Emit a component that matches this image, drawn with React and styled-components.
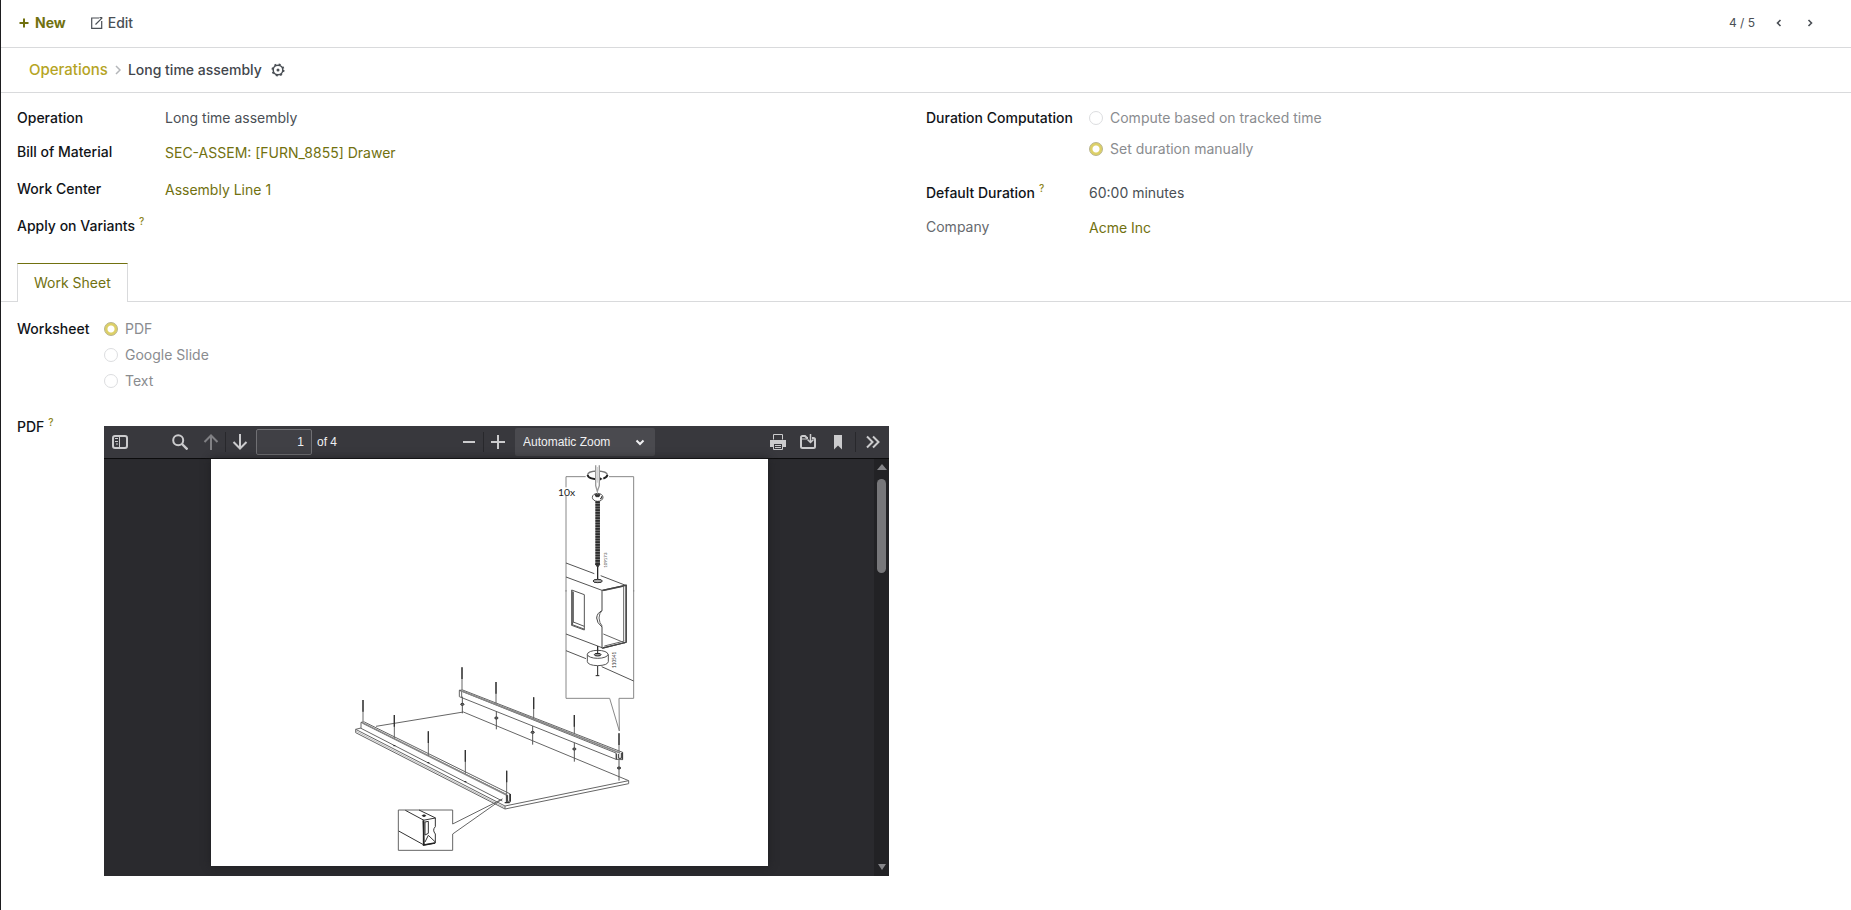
import React from "react";
import styled, { createGlobalStyle } from "styled-components";

const GlobalStyle = createGlobalStyle`
  *, *::before, *::after {
    box-sizing: border-box;
  }
  body {
    margin: 0;
    background: #fff;
    color: #4a4f55;
    font-family: Inter, "Liberation Sans", sans-serif;
    font-size: 14px;
    line-height: 20px;
  }
  a {
    text-decoration: none;
  }
  svg {
    display: block;
    fill: none;
    stroke: currentColor;
  }
`;

const Screen = styled.div`
  min-height: 100vh;
  border-left: 1px solid #1d1d1f;
`;
const ControlBar = styled.header`
  display: flex;
  align-items: center;
  height: 48px;
  padding: 0 26px 2px 17px;
  border-bottom: 1px solid #d9dadc;
`;
const BarButton = styled.button`
  display: flex;
  align-items: center;
  gap: 5px;
  margin-right: 25px;
  padding: 0;
  border: 0;
  background: none;
  font: inherit;
  font-weight: ${(props) => (props.$primary ? 700 : 500)};
  color: ${(props) => (props.$primary ? "#71710f" : "#4a4f55")};
`;
const Pager = styled.div`
  display: flex;
  align-items: center;
  margin-left: auto;
  font-size: 12px;
`;
const PagerButton = styled.button`
  display: flex;
  justify-content: center;
  width: 31px;
  padding: 0;
  border: 0;
  background: none;
  color: #4a4f55;
`;
const PagerValue = styled.span`
  margin-right: 8px;
`;
const Breadcrumb = styled.nav`
  display: flex;
  align-items: center;
  gap: 7px;
  height: 45px;
  padding: 0 28px;
  border-bottom: 1px solid #d9dadc;
  font-weight: 500;
  color: #42464c;
`;
const BreadcrumbLink = styled.a`
  color: #b5a424;
  font-size: 15px;
`;
const IconButton = styled.button`
  padding: 0 2px;
  border: 0;
  background: none;
  color: #4a4f55;
`;
const Sheet = styled.div`
  display: grid;
  grid-template-columns: 1fr 1fr;
  padding: ${(props) => props.$top}px 16px 0;
`;
const Group = styled.div`
  display: flex;
  flex-direction: column;
  padding-right: 37px;
`;
const Row = styled.div`
  display: grid;
  grid-template-columns: ${(props) => props.$label}px 1fr;
  align-items: ${(props) => (props.$top ? "start" : "center")};
  min-height: ${(props) => props.$height || 37}px;
`;
const Label = styled.div`
  color: ${(props) => (props.$muted ? "#66696e" : "#111418")};
  font-weight: ${(props) => (props.$muted ? 400 : 500)};
  line-height: ${(props) => props.$line || 20}px;
`;
const Help = styled.sup`
  margin-left: 4px;
  font-size: 10px;
  line-height: 0;
  color: #8c8420;
`;
const ValueLink = styled.a`
  padding-top: 2px;
  color: #71710f;
`;
const Options = styled.div`
  display: flex;
  flex-direction: column;
`;
const Option = styled.label`
  display: flex;
  align-items: center;
  gap: 7px;
  height: ${(props) => props.$height}px;
  color: #8a8c8f;
`;
const Radio = styled.input`
  appearance: none;
  width: 14px;
  height: 14px;
  margin: 0;
  border: 1px solid #dcdddf;
  border-radius: 50%;
  background: #fff;
  &:checked {
    border-color: #b9b58c;
    background: radial-gradient(circle, #fff 3px, #ddd067 4px);
  }
`;
const Tabs = styled.div`
  display: flex;
  margin-top: 19px;
  padding: 0 16px;
  border-bottom: 1px solid #d9dadc;
`;
const Tab = styled.button`
  height: 39px;
  margin-bottom: -1px;
  padding: 0 16px;
  border: 1px solid #d9dadc;
  border-top-color: #71710f;
  border-bottom: 0;
  background: #fff;
  color: #71710f;
  font: inherit;
`;
const Viewer = styled.section`
  margin-top: 12px;
  background: #2a2a2e;
`;
const Toolbar = styled.div`
  display: flex;
  justify-content: space-between;
  align-items: center;
  height: 33px;
  padding: 0 2px;
  border-bottom: 1px solid #0c0c0d;
  background: #38383d;
  font-family: "Liberation Sans", sans-serif;
  font-size: 12px;
  color: #f0f0f2;
`;
const Tools = styled.div`
  display: flex;
  align-items: center;
  gap: ${(props) => props.$gap || 0}px;
`;
const Tool = styled.button`
  display: flex;
  align-items: center;
  justify-content: center;
  width: 28px;
  height: 28px;
  padding: 0;
  border: 0;
  background: none;
  color: ${(props) => (props.disabled ? "#808084" : "#cbcbcd")};
`;
const SearchTools = styled(Tools)`
  margin-right: 3px;
`;
const Separator = styled.span`
  width: 1px;
  height: 20px;
  margin: 0 ${(props) => props.$space || 0}px;
  background: #28282c;
`;
const PageInput = styled.input`
  width: 56px;
  height: 26px;
  margin: 0 5px 0 2px;
  padding: 0 7px;
  border: 1px solid #707074;
  border-radius: 2px;
  background: #404045;
  color: inherit;
  font: inherit;
  text-align: right;
`;
const PageCount = styled.span`
  padding-right: 9px;
`;
const ZoomBox = styled.div`
  display: grid;
  align-items: center;
  margin-left: 3px;
  > * {
    grid-area: 1 / 1;
  }
  svg {
    justify-self: end;
    margin-right: 10px;
    pointer-events: none;
  }
`;
const ZoomSelect = styled.select`
  appearance: none;
  width: 140px;
  height: 28px;
  padding: 0 8px;
  border: 0;
  border-radius: 2px;
  background: #4a4a4f;
  color: inherit;
  font: inherit;
`;
const Canvas = styled.div`
  display: flex;
  align-items: stretch;
`;
const Pages = styled.div`
  flex: 1;
  padding: 0 106px 10px 107px;
`;
const Page = styled.div`
  background: #fff;
  box-shadow: 0 0 8px #1f1f22;
`;
const ScrollTrack = styled.div`
  display: flex;
  flex-direction: column;
  align-items: center;
  width: 15px;
  padding: 5px 0 6px;
  background: #222225;
  color: #858589;
`;
const ScrollThumb = styled.div`
  width: 9px;
  height: 94px;
  margin: 9px 0 auto;
  border-radius: 5px;
  background: #77777a;
`;

const backPins = [
  [366, 22, 90], [468, 66, 131], [581, 112, 176], [703, 165, 222], [837, 220, 275],
];
const frontPins = [
  [69, 120, 186], [163, 165, 235], [265, 214, 287], [376, 270, 341], [500, 332, 402],
];
const washers = [
  [367, 133, 110, 160], [469, 174, 154, 208], [578, 217, 198, 254], [703, 267, 248, 305], [837, 324, 300, 362],
];

const AssemblyDrawing = () => (
  <svg viewBox="0 0 1671 1221" width="100%" role="img" aria-label="Drawer assembly" stroke="#777" strokeWidth="3">
    {/* drawer base with both side rails */}
    <g transform="translate(387 603)" stroke="#666">
      <path d="M108 199 370 156 866 362 495 438 47 208 M47 208v10l448 229 371-76v-9 M495 438v9 M47 208l16-4" />
      <path d="M47 213 495 443" stroke="#999" strokeWidth="2" />
      <path d="M63 187v18l424 218 M63 187l10-1 438 216v24l-12 2v-25L63 187 M503 406v18h6v-22" />
      <path d="M70 190 500 405" stroke="#888" strokeWidth="5" />
      <path d="M358 91v19l470 188v-19L358 91l10-1 480 187v22l-20-1 M358 91l7 2v18" />
      <path d="M364 92 840 279" stroke="#888" strokeWidth="5" />
      <path d="M830 281v17 M847 277v22 M836 282v13h8v-16" stroke="#333" strokeWidth="3" />
      <path d="M501 404v24 M511 402v22 M494 428h15" stroke="#333" strokeWidth="4" />
      {[...backPins, ...frontPins].map(([x, top, end]) => (
        <g key={x}>
          <path d={`M${x} ${top}V${end}`} strokeWidth="3" />
          <path d={`M${x} ${top}v35`} stroke="#333" strokeWidth="4" />
        </g>
      ))}
      {washers.map(([x, y, top, end]) => (
        <g key={x}>
          <path d={`M${x} ${top}V${end}`} strokeWidth="3" stroke="#555" />
          <ellipse cx={x} cy={y} rx="5" ry="3" fill="#777" stroke="#333" />
        </g>
      ))}
      <path d="M160 257h6 M262 308h6 M373 365h6" stroke="#222" />
      <path d="M175 450h163v42l149-75-149 105v49H175z" />
      <path d="M196 451l56 30 M237 450l50 24 M176 513l76 42 M249 481l37-7v26q-10 10 0 22v27l-34 6z M255 486l10-2v36l-10 5z M255 546l10-20 21 20" stroke="#333" />
      <path d="M251 482v73l34-6" stroke="#222" strokeWidth="5" />
      <ellipse cx="252" cy="467" rx="5" ry="2" stroke="#222" fill="#222" />
    </g>
    {/* enlarged callout: screw */}
    <g transform="translate(987 -12)">
      <path d="M137 65H78v32 M78 122v288 M207 65h74v345" strokeWidth="3" stroke="#888" />
      <path d="M143 60q0-11 28-12 31 1 31 12" stroke="#777" strokeWidth="4" />
      <path d="M143 60q1 13 39 13M202 60q0 6-12 11" stroke="#222" strokeWidth="6" />
      <path d="M174 63l14 9-14 7z" fill="#222" stroke="none" />
      <path d="M167 31v61l5 17 6-17V31" fill="#fff" stroke="#999" strokeWidth="4" />
      <path d="M172 36v47" stroke="#ccc" strokeWidth="3" />
      <ellipse cx="173" cy="127" rx="16" ry="12" stroke="#555" fill="#fff" />
      <path d="M165 119h15l-3 6h-9z M180 132q8-2 5-8" fill="#333" stroke="#333" />
      <path d="M173 139v188" stroke="#777" strokeWidth="14" />
      <path d="M173 139v190" stroke="#2b2b2b" strokeWidth="13" strokeDasharray="5 3" />
      <path d="M166 327l7 10 7-10z" fill="#333" stroke="#333" />
      <path d="M173 337v40" stroke="#222" />
      <ellipse cx="173" cy="379" rx="13" ry="3" stroke="#222" fill="#555" />
      <text x="54" y="123" fontFamily="Lato, sans-serif" fontSize="31" fill="#222" stroke="none">10x</text>
      <text transform="translate(202 338) rotate(-90)" fontFamily="Lato, sans-serif" fontSize="13" fill="#333" stroke="none">109173</text>
    </g>
    {/* enlarged callout: rail end and washer */}
    <g transform="translate(987 303)">
      <path d="M78 90v325h131l29 98-1-98h44V90" stroke="#888" />
      <path d="M78 9l85 32 M182 47l75 29 M78 51l108 40 M78 222l108 41 M78 272l60 24 M185 320l96 43" stroke="#555" />
      <path d="M186 91l73-16v172l-73 18v-64q-16-13-16-27 1-15 16-22z" stroke="#444" />
      <path d="M186 152q-8 6-9 22 1 15 10 25 M191 92l60-13v165 M190 222l65 27 M193 258l60-15" stroke="#666" />
      <path d="M188 91l70-15v171l-70 17" stroke="#444" strokeWidth="4" />
      <path d="M95 90l38 14v106L95 196z M100 95v91l33 13 M100 186l-5 10" stroke="#555" />
      <path d="M97 94v100l35 13" stroke="#555" strokeWidth="3" />
      <path d="M173 20v43 M173 260v25 M173 316v31" stroke="#222" />
      <ellipse cx="173" cy="63" rx="14" ry="5" stroke="#333" fill="#aaa" />
      <path d="M142 283v22q2 11 31 12 30-1 32-12v-22" fill="#fff" stroke="#555" />
      <ellipse cx="173" cy="283" rx="31" ry="12" fill="#fff" stroke="#555" />
      <ellipse cx="173" cy="284" rx="10" ry="4" fill="#999" stroke="#222" />
      <path d="M173 258v24 M167 347h11" stroke="#222" />
      <text transform="translate(227 324) rotate(-90)" fontFamily="Lato, sans-serif" fontSize="14" fill="#333" stroke="none">110541</text>
    </g>
  </svg>
);

const RadioOption = ({ name, text, checked, height }) => (
  <Option $height={height}>
    <Radio type="radio" name={name} defaultChecked={checked} />
    {text}
  </Option>
);

const Chevron = ({ left }) => (
  <svg width="12" height="12" strokeWidth="1.6">
    <path d={left ? "M7.5 3 4.5 6l3 3" : "M4.5 3l3 3-3 3"} />
  </svg>
);

const Crumb = () => (
  <svg width="6" height="12" strokeWidth="1.5">
    <path d="M1 2l4 4-4 4" stroke="#b4b6b9" />
  </svg>
);

const PdfViewer = () => (
  <Viewer aria-label="PDF viewer">
    <Toolbar>
      <Tools>
        <SearchTools $gap={32}>
          <Tool aria-label="Toggle Sidebar">
            <svg width="16" height="16" strokeWidth="2">
              <rect x="1" y="2" width="14" height="12" rx="2" />
              <path d="M7.5 2v12M3 4.5h3M3 7.5h3M4 10h2" strokeWidth="1" />
            </svg>
          </Tool>
          <Tool aria-label="Find">
            <svg width="16" height="16" strokeWidth="2">
              <circle cx="6.2" cy="6.2" r="5" />
              <path d="M10 10l5.5 5.5" strokeWidth="2.4" />
            </svg>
          </Tool>
        </SearchTools>
        <Tool aria-label="Previous Page" disabled>
          <svg width="16" height="16" strokeWidth="2">
            <path d="M8 16V1.5M1.5 8 8 1.5 14.5 8" />
          </svg>
        </Tool>
        <Separator />
        <Tool aria-label="Next Page">
          <svg width="16" height="16" strokeWidth="2">
            <path d="M8 0v14.5M1.5 8 8 14.5 14.5 8" />
          </svg>
        </Tool>
        <PageInput aria-label="Page" defaultValue="1" />
        <PageCount>of 4</PageCount>
      </Tools>
      <Tools>
        <Tool aria-label="Zoom Out">
          <svg width="16" height="16" strokeWidth="2">
            <path d="M2 8h12" />
          </svg>
        </Tool>
        <Separator />
        <Tool aria-label="Zoom In">
          <svg width="16" height="16" strokeWidth="2">
            <path d="M1 8h14M8 1v14" />
          </svg>
        </Tool>
        <ZoomBox>
          <ZoomSelect aria-label="Zoom">
            <option>Automatic Zoom</option>
          </ZoomSelect>
          <svg width="10" height="10" strokeWidth="2">
            <path d="M1.5 3.5 5 7l3.5-3.5" />
          </svg>
        </ZoomBox>
      </Tools>
      <Tools $gap={2}>
        <Tool aria-label="Print">
          <svg width="16" height="16">
            <path d="M0 6h16v7h-3v-3H3v3H0z" fill="currentColor" stroke="none" />
            <path d="M3.5 5.5v-5h9v5M3.5 9.5h9v6h-9zM5 11.5h6M5 13.5h6" />
          </svg>
        </Tool>
        <Tool aria-label="Save">
          <svg width="16" height="16" strokeWidth="2">
            <path d="M12 4h1.5Q15 4 15 5.5v7q0 1.5-1.5 1.5h-11Q1 14 1 12.5v-9Q1 2 2.5 2H5l2 2h1" />
            <path d="M1 5h6" strokeWidth="1" />
            <path d="M10.500 0v8M7.5 5.5l3 3 3-3" strokeWidth="1.5" />
          </svg>
        </Tool>
        <Tool aria-label="Current View">
          <svg width="16" height="16">
            <path d="M4 1h8v14.5l-4-4-4 4z" fill="currentColor" stroke="none" />
          </svg>
        </Tool>
        <Separator $space={1} />
        <Tool aria-label="Tools">
          <svg width="16" height="16" strokeWidth="2">
            <path d="M2 2.5 7.5 8 2 13.5M8 2.5 13.5 8 8 13.5" />
          </svg>
        </Tool>
      </Tools>
    </Toolbar>
    <Canvas>
      <Pages>
        <Page>
          <AssemblyDrawing />
        </Page>
      </Pages>
      <ScrollTrack>
        <svg width="10" height="6">
          <path d="M0 6l5-6 5 6z" fill="currentColor" stroke="none" />
        </svg>
        <ScrollThumb />
        <svg width="8" height="6">
          <path d="M0 0h8L4 6z" fill="currentColor" stroke="none" />
        </svg>
      </ScrollTrack>
    </Canvas>
  </Viewer>
);

const App = () => {
  return (
    <Screen>
      <GlobalStyle />
      <ControlBar>
        <BarButton $primary>
          <svg width="12" height="12" strokeWidth="2">
            <path d="M1.5 6h9M6 1.5v9" />
          </svg>
          New
        </BarButton>
        <BarButton>
          <svg width="12" height="12" strokeWidth="1.2">
            <path d="M8 1H.7v10.3h10V4M4.5 7.5 11.2.8M8.5.7h2.8" />
          </svg>
          Edit
        </BarButton>
        <Pager>
          <PagerValue>4 / 5</PagerValue>
          <PagerButton aria-label="Previous">
            <Chevron left />
          </PagerButton>
          <PagerButton aria-label="Next">
            <Chevron />
          </PagerButton>
        </Pager>
      </ControlBar>
      <Breadcrumb>
        <BreadcrumbLink href="#operations">Operations</BreadcrumbLink>
        <Crumb />
        <span>Long time assembly</span>
        <IconButton aria-label="Actions">
          <svg width="14" height="14" strokeWidth="1.5">
            <circle cx="7" cy="7" r="4.8" />
            <circle cx="7" cy="7" r="5.6" strokeDasharray="2 2.398" strokeWidth="1.8" />
            <circle cx="7" cy="7" r="1.5" fill="currentColor" stroke="none" />
          </svg>
        </IconButton>
      </Breadcrumb>
      <Sheet $top={8}>
        <Group>
          <Row $label={148} $height={33}>
            <Label>Operation</Label>
            <span>Long time assembly</span>
          </Row>
          <Row $label={148} $height={36}>
            <Label>Bill of Material</Label>
            <ValueLink href="#bom">SEC-ASSEM: [FURN_8855] Drawer</ValueLink>
          </Row>
          <Row $label={148}>
            <Label>Work Center</Label>
            <ValueLink href="#work-center">Assembly Line 1</ValueLink>
          </Row>
          <Row $label={148}>
            <Label>
              Apply on Variants<Help>?</Help>
            </Label>
          </Row>
        </Group>
        <Group>
          <Row $label={163} $height={74} $top>
            <Label $line={33}>Duration Computation</Label>
            <Options role="radiogroup" aria-label="Duration Computation">
              <RadioOption name="duration" text="Compute based on tracked time" height={33} />
              <RadioOption name="duration" text="Set duration manually" height={30} checked />
            </Options>
          </Row>
          <Row $label={163} $height={35}>
            <Label>
              Default Duration<Help>?</Help>
            </Label>
            <span>60:00 minutes</span>
          </Row>
          <Row $label={163} $height={34}>
            <Label $muted>Company</Label>
            <ValueLink href="#company">Acme Inc</ValueLink>
          </Row>
        </Group>
      </Sheet>
      <Tabs role="tablist">
        <Tab role="tab" aria-selected="true">
          Work Sheet
        </Tab>
      </Tabs>
      <Sheet $top={14}>
        <Group>
          <Row $label={87} $height={98} $top>
            <Label $line={26}>Worksheet</Label>
            <Options role="radiogroup" aria-label="Worksheet">
              <RadioOption name="worksheet" text="PDF" height={26} checked />
              <RadioOption name="worksheet" text="Google Slide" height={26} />
              <RadioOption name="worksheet" text="Text" height={26} />
            </Options>
          </Row>
          <Row $label={87} $top>
            <Label $line={26}>
              PDF<Help>?</Help>
            </Label>
            <PdfViewer />
          </Row>
        </Group>
      </Sheet>
    </Screen>
  );
};

export default App;
